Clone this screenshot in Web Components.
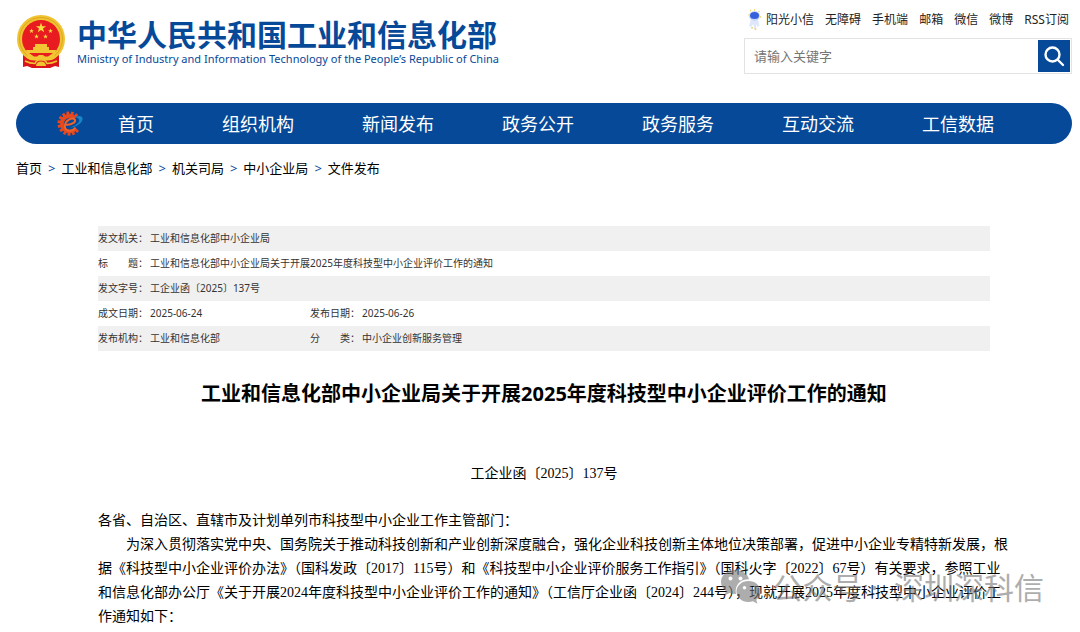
<!DOCTYPE html>
<html lang="zh-CN">
<head>
<meta charset="utf-8">
<meta name="viewport" content="width=device-width, initial-scale=1">
<title>工业和信息化部中小企业局关于开展2025年度科技型中小企业评价工作的通知</title>
<style>
  body {
    margin: 0;
    background: #fff;
    color: #000;
    font-family: "Noto Sans", "Noto Sans CJK SC", sans-serif;
    overflow-x: hidden;
    --brand: #064998;
  }
</style>
</head>
<body>
<miit-page>
  <site-header slot="header"></site-header>
  <site-nav slot="nav"></site-nav>
  <bread-crumb slot="crumb" items="首页,工业和信息化部,机关司局,中小企业局,文件发布"></bread-crumb>
  <doc-meta></doc-meta>
  <doc-article>
    <span slot="title">工业和信息化部中小企业局关于开展2025年度科技型中小企业评价工作的通知</span>
    <span slot="number">工企业函〔2025〕137号</span>
    <p>各省、自治区、直辖市及计划单列市科技型中小企业工作主管部门：</p>
    <p>　　为深入贯彻落实党中央、国务院关于推动科技创新和产业创新深度融合，强化企业科技创新主体地位决策部署，促进中小企业专精特新发展，根<br>据《科技型中小企业评价办法》（国科发政〔2017〕115号）和《科技型中小企业评价服务工作指引》（国科火字〔2022〕67号）有关要求，参照工业<br>和信息化部办公厅《关于开展2024年度科技型中小企业评价工作的通知》（工信厅企业函〔2024〕244号），现就开展2025年度科技型中小企业评价工<br>作通知如下：</p>
  </doc-article>
  <water-mark slot="overlay">公众号 ·&nbsp; 深圳深科信</water-mark>
</miit-page>

<script>
(function () {
'use strict';

function render(host, html) {
    let template = document.createElement('template');
    template.innerHTML = html;
    host.attachShadow({ mode: 'open' }).appendChild(template.content.cloneNode(true));
}

class MiitPage extends HTMLElement {
    constructor() {
        super();
        render(this, `
<style>
:host{
  display: block;
  position: relative;
  padding: 0 8px 0 16px;
}
main{
  padding: 48px 82px 0 82px;
}
</style>
<slot name="header"></slot>
<slot name="nav"></slot>
<slot name="crumb"></slot>
<main><slot></slot></main>
<slot name="overlay"></slot>`);
    }
}

class StateEmblem extends HTMLElement {
    constructor() {
        super();
        render(this, `
<style>
:host{ display: block; flex: none; }
svg{ display: block; width: 50px; height: 56px; }
</style>
<svg viewBox="0 0 50 56" aria-hidden="true">
  <path d="M7 38v15l4-1 5 2h18l5-2 4 1V38z" fill="#d9151b"/>
  <circle cx="25" cy="25" r="24" fill="#f0c330"/>
  <circle cx="25" cy="25" r="21.500" fill="none" stroke="#dda820" stroke-width="1"/>
  <circle cx="25" cy="25" r="19" fill="#e81b20"/>
  <g fill="#fbdc40">
    <path d="m25 8.500 1.200 3.700h3.900L27 14.500l1.200 3.700-3.200-2.300-3.200 2.300 1.200-3.700-3.100-2.300h3.900z"/>
    <path d="m15.500 14.500.600 1.700h1.800l-1.400 1.100.500 1.700-1.500-1-1.500 1 .500-1.700-1.400-1.100h1.800z"/>
    <path d="m34.500 14.500.600 1.700h1.800l-1.400 1.100.500 1.700-1.500-1-1.500 1 .500-1.700-1.400-1.100h1.800z"/>
    <path d="m20.500 20 .600 1.700h1.800l-1.400 1.100.500 1.700-1.500-1-1.500 1 .500-1.700-1.400-1.100h1.800z"/>
    <path d="m29.500 20 .600 1.700h1.800l-1.400 1.100.500 1.700-1.500-1-1.500 1 .500-1.700-1.400-1.100h1.800z"/>
  </g>
  <path d="M19 30h12v3h2v3h7l-2 8-7 3h-12l-7-3-2-8h7v-3h2z" fill="#f2c632"/>
  <path d="M13 39h24l-5 3.500h-3L27 41h-4l-2 1.500h-3z" fill="#e81b20"/>
  <path d="M8 42c3 4 8 4.500 11 4.500h12c3 0 8-.500 11-4.500l-1 5c-3 2-6 3-9 3H18c-3 0-6-1-9-3z" fill="#e2191d"/>
  <path d="M9 47c4 2 7 2.500 10 2.500 1-2.500 3-4 6-4s5 1.500 6 4c3 0 6-.500 10-2.500" fill="none" stroke="#f0c330" stroke-width="1.500"/>
  <path d="M20 52c0-3 2-4.500 5-4.500s5 1.500 5 4.500z" fill="#f0c330"/>
</svg>`);
    }
}

class SiteHeader extends HTMLElement {
    constructor() {
        super();
        render(this, `
<style>
:host{
  display: flex;
  justify-content: space-between;
  align-items: flex-start;
  height: 103px;
}
.brand{
  display: flex;
  gap: 11px;
  padding-top: 14px;
  color: var(--brand);
  white-space: nowrap;
}
h1{
  margin: 0;
  padding-top: 4px;
  font-size: 30px;
  line-height: 34px;
  font-weight: 700;
}
.brand p{
  margin: 0;
  font-size: 11px;
  line-height: 14px;
  font-weight: 400;
}
</style>
<div class="brand">
  <state-emblem></state-emblem>
  <div>
    <h1>中华人民共和国工业和信息化部</h1>
    <p>Ministry of Industry and Information Technology of the People’s Republic of China</p>
  </div>
</div>
<search-panel></search-panel>`);
    }
}

class SearchPanel extends HTMLElement {
    constructor() {
        super();
        render(this, `
<style>
:host{
  display: block;
  width: 328px;
}
.links{
  display: flex;
  justify-content: space-between;
  align-items: center;
  height: 38px;
  padding: 2px 3px 0 4px;
  box-sizing: border-box;
  white-space: nowrap;
}
a{
  display: flex;
  align-items: center;
  gap: 5px;
  color: #222;
  font-size: 12px;
  line-height: 16px;
  text-decoration: none;
}
form{
  display: flex;
  box-sizing: border-box;
  height: 36px;
  padding: 1px;
  border: 1px solid #e3e3e3;
}
input{
  flex: 1;
  min-width: 0;
  padding: 0 8px;
  border: 0;
  outline: 0;
  font: 13px/20px "Noto Sans", "Noto Sans CJK SC", sans-serif;
}
input::placeholder{ color: #757575; }
button{
  display: grid;
  place-items: center;
  width: 32px;
  padding: 0;
  border: 0;
  background: var(--brand);
}
</style>
<div class="links">
  <a href="#"><svg width="13" height="22" viewBox="0 0 13 22" aria-hidden="true">
    <path d="M2 1.500h1M6 1h1M10.500 2.500h1M.5 6h1M12 8h1" stroke="#f3cf4d" stroke-width="1.500"/>
    <path d="M3 10h7l1.500 7-2 1-1-3-.5 5h-2L5.500 15 3 18l-2-1z" fill="#dfe8fa"/>
    <ellipse cx="6.500" cy="7" rx="5.500" ry="5" fill="#cad8f7"/>
    <ellipse cx="6.500" cy="6.500" rx="4.500" ry="3.500" fill="#3460dc"/>
    <path d="M4 18v1.500M7.500 19.500V21" stroke="#f0c958" stroke-width="1.500"/>
  </svg>阳光小信</a>
  <a href="#">无障碍</a>
  <a href="#">手机端</a>
  <a href="#">邮箱</a>
  <a href="#">微信</a>
  <a href="#">微博</a>
  <a href="#">RSS订阅</a>
</div>
<form role="search">
  <input type="text" aria-label="搜索" placeholder="请输入关键字">
  <button type="button" aria-label="搜索">
    <svg width="22" height="22" viewBox="0 0 22 22" fill="none" stroke="#fff" stroke-width="2.400" stroke-linecap="round"><circle cx="9.500" cy="9.500" r="7"/><path d="m15 15 5 5"/></svg>
  </button>
</form>`);
    }
}

class SiteNav extends HTMLElement {
    constructor() {
        super();
        let items = ['首页', '组织机构', '新闻发布', '政务公开', '政务服务', '互动交流', '工信数据'];
        // gear teeth, left open on the right where the swoosh leaves
        let teeth = [45, 69, 93, 117, 141, 165, 189, 213, 237, 261, 285, 309].map((deg) =>
            `<rect x="22.500" y="12" width="4" height="3" transform="rotate(${deg} 13.500 13.500)"/>`).join('');
        render(this, `
<style>
:host{ display: block; }
nav{
  display: flex;
  align-items: center;
  height: 41px;
  padding-left: 41px;
  border-radius: 21px;
  background: var(--brand);
  white-space: nowrap;
}
svg{ flex: none; margin-right: 35px; }
ul{
  display: flex;
  gap: 68px;
  margin: 0;
  padding: 0;
  list-style: none;
}
a{
  color: #fff;
  font-size: 18px;
  line-height: 26px;
  text-decoration: none;
}
</style>
<nav aria-label="主导航">
  <svg width="26" height="26" viewBox="0 0 28 28" aria-hidden="true">
    <g fill="#e8481c">${teeth}</g>
    <path d="M20.500 20.800A10 10 0 1 1 20.500 6.200l-2.500 2A7 7 0 1 0 18 19.500z" fill="#e8481c" stroke="#e8481c" stroke-width="1"/>
    <path d="M19 6c7-1.500 9 0 8.500 3-1 5-7 8.500-15 9.500 6-2 11-5 11.500-8 0-2-2-3.500-5-4.500z" fill="#1685c9"/>
    <path d="M20 18c-4 5-12 4-11.500-2C9 10 16 6.500 19 9c2 2.500-2 5.500-9 6" fill="none" stroke="#f0622a" stroke-width="2.200"/>
  </svg>
  <ul>${items.map((item) => `<li><a href="#">${item}</a></li>`).join('')}</ul>
</nav>`);
    }
}

class BreadCrumb extends HTMLElement {
    constructor() {
        super();
        let items = this.getAttribute('items').split(',');
        render(this, `
<style>
:host{
  display: block;
  padding-top: 14px;
}
nav{
  display: flex;
  gap: 6px;
  font-size: 13px;
  line-height: 20px;
}
a{ color: #000; text-decoration: none; }
span{ color: var(--brand); }
</style>
<nav aria-label="当前位置">${items.map((item) => `<a href="#">${item}</a>`).join('<span>&gt;</span>')}</nav>`);
    }
}

class DocMeta extends HTMLElement {
    constructor() {
        super();
        render(this, `
<style>
:host{ display: block; }
table{
  width: 100%;
  table-layout: fixed;
  border-collapse: collapse;
  font-size: 10px;
  line-height: 15px;
  color: #333;
}
th, td{
  padding: 5px 0;
  font-weight: 400;
  text-align: left;
  white-space: nowrap;
}
tr:nth-child(odd){ background: #f0f0f0; }
.label{ width: 52px; }
.value{ width: 160px; }
</style>
<table>
  <colgroup><col class="label"><col class="value"><col class="label"><col></colgroup>
  <tbody>
  <tr><th scope="row">发文机关：</th><td colspan="3">工业和信息化部中小企业局</td></tr>
  <tr><th scope="row">标　　题：</th><td colspan="3">工业和信息化部中小企业局关于开展2025年度科技型中小企业评价工作的通知</td></tr>
  <tr><th scope="row">发文字号：</th><td colspan="3">工企业函〔2025〕137号</td></tr>
  <tr><th scope="row">成文日期：</th><td>2025-06-24</td><th scope="row">发布日期：</th><td>2025-06-26</td></tr>
  <tr><th scope="row">发布机构：</th><td>工业和信息化部</td><th scope="row">分　　类：</th><td>中小企业创新服务管理</td></tr>
  </tbody>
</table>`);
    }
}

class DocArticle extends HTMLElement {
    constructor() {
        super();
        render(this, `
<style>
:host{ display: block; }
h2{
  margin: 29px 0 0;
  font-size: 20px;
  line-height: 28px;
  text-align: center;
}
.number, .body{
  font-family: "Liberation Serif", "Noto Sans CJK SC", serif;
  font-size: 14px;
  line-height: 24px;
}
.number{
  margin: 54px 0 23px;
  text-align: center;
}
.body{
  padding-bottom: 4px;
  white-space: nowrap;
}
::slotted(p){ margin: 0; }
</style>
<h2><slot name="title"></slot></h2>
<div class="number"><slot name="number"></slot></div>
<div class="body"><slot></slot></div>`);
    }
}

class WaterMark extends HTMLElement {
    constructor() {
        super();
        render(this, `
<style>
:host{
  position: absolute;
  right: 36px;
  bottom: 25px;
  display: flex;
  align-items: center;
  gap: 12px;
  color: #777;
  font-size: 30px;
  line-height: 40px;
  white-space: nowrap;
  opacity: .6;
  pointer-events: none;
}
</style>
<svg width="40" height="36" viewBox="0 0 40 36" aria-hidden="true">
  <path fill="#777" fill-rule="evenodd" d="M14 0C6 0 0 5.300 0 12c0 4 2 7 5 9l-1.500 4.500L8.500 23c2 .600 3.500.900 5.500.900h1C13 15 20 9 28 9.300 27 4 21 0 14 0zM9.500 6.500a2 2 0 1 1 0 4 2 2 0 0 1 0-4zm10 0a2 2 0 1 1 0 4 2 2 0 0 1 0-4z"/>
  <path fill="#777" fill-rule="evenodd" d="M27.500 11C20.500 11 15.500 16 15.500 21.500S20.500 32 27.500 32c1.500 0 3-.300 4.500-.800l4.500 2.500-1.300-4C38 28 39.500 25 39.500 21.500 39.500 16 34.500 11 27.500 11zM23.500 16a1.700 1.700 0 1 1 0 3.400 1.700 1.700 0 0 1 0-3.400zm8 0a1.700 1.700 0 1 1 0 3.400 1.700 1.700 0 0 1 0-3.400z"/>
</svg>
<slot></slot>`);
    }
}

window.customElements.define('miit-page', MiitPage);
window.customElements.define('state-emblem', StateEmblem);
window.customElements.define('search-panel', SearchPanel);
window.customElements.define('site-header', SiteHeader);
window.customElements.define('site-nav', SiteNav);
window.customElements.define('bread-crumb', BreadCrumb);
window.customElements.define('doc-meta', DocMeta);
window.customElements.define('doc-article', DocArticle);
window.customElements.define('water-mark', WaterMark);

}());
</script>
</body>
</html>
